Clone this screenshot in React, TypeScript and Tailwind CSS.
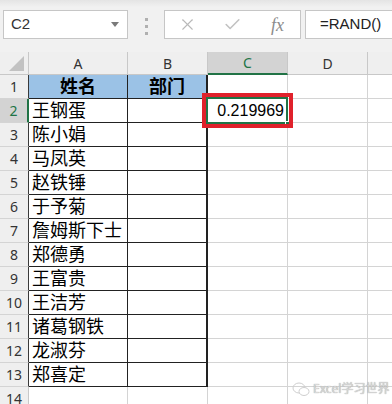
import { X, Check } from "lucide-react";

const font = { fontFamily: '"Noto Sans", "Noto Sans CJK SC", sans-serif' };

const names = [
  "王钢蛋",
  "陈小娟",
  "马凤英",
  "赵铁锤",
  "于予菊",
  "詹姆斯下士",
  "郑德勇",
  "王富贵",
  "王洁芳",
  "诸葛钢铁",
  "龙淑芬",
  "郑喜定",
];

function RowHeader({ n, selected, dark }: { n: number; selected?: boolean; dark?: boolean }) {
  return (
    <div
      className={
        "w-[29px] h-full flex items-center justify-center text-[14px] border-b border-b-[#d4d4d4] " +
        (selected
          ? "bg-[#d3d3d3] text-[#217346] border-r-2 border-r-[#217346]"
          : dark
          ? "bg-[#efefef] text-[#333] border-r border-r-[#3a3a3a]"
          : "bg-[#efefef] text-[#333] border-r border-r-[#c8c8c8]")
      }
    >
      {n}
    </div>
  );
}

function Empty({ w }: { w: string }) {
  return <div className={w + " h-full border-r border-b border-[#d4d4d4]"}></div>;
}

export default function App() {
  return (
    <div className="w-[392px] h-[404px] overflow-hidden bg-white relative" style={font}>
      {/* TOP BAR */}
      <div className="h-[52px] bg-[#f1f1f1] flex items-start pt-[10px] relative">
        <div className="absolute top-0 left-0 right-0 h-[7px] bg-gradient-to-b from-[#e4e4e4] to-[#f1f1f1]"></div>

        <div className="relative ml-[3px] w-[125px] h-[29px] bg-white border border-[#c6c6c6] flex items-center justify-between pl-[7px] pr-[8px]">
          <span className="text-[15px] text-[#333]" style={{ fontFamily: '"Liberation Sans", sans-serif' }}>C2</span>
          <svg width="8" height="5" viewBox="0 0 8 5">
            <path d="M0 0 L8 0 L4 5 Z" fill="#7a7a7a" />
          </svg>
        </div>

        <div className="ml-[17px] mt-[8px] flex flex-col gap-[4px]">
          <div className="w-[3px] h-[3px] bg-[#b0b0b0]"></div>
          <div className="w-[3px] h-[3px] bg-[#b0b0b0]"></div>
          <div className="w-[3px] h-[3px] bg-[#b0b0b0]"></div>
        </div>

        <div className="relative ml-[16px] w-[137px] h-[29px] bg-white border border-[#c6c6c6] flex items-center">
          <div className="w-[46px] flex justify-center">
            <X size={19} strokeWidth={1.4} color="#b9b9b9" />
          </div>
          <div className="w-[46px] flex justify-center">
            <Check size={19} strokeWidth={2} color="#c2c2c2" />
          </div>
          <div className="w-[46px] flex justify-center">
            <span className="text-[18px] italic text-[#8c8c8c] leading-none" style={{ fontFamily: '"Liberation Serif", serif' }}>
              fx
            </span>
          </div>
        </div>

        <div className="ml-[4px] flex-1 -mr-[4px] h-[29px] bg-white border border-[#c6c6c6] flex items-center pl-[14px]">
          <span className="text-[15px] text-[#222]" style={{ fontFamily: '"Liberation Sans", sans-serif' }}>=RAND()</span>
        </div>
      </div>

      {/* COLUMN HEADERS */}
      <div className="h-[23px] flex bg-[#efefef] text-[14px] text-[#333]">
        <div className="w-[29px] h-full border-r border-b border-[#c8c8c8] relative">
          <svg className="absolute right-[4px] bottom-[3px]" width="15" height="15" viewBox="0 0 15 15">
            <path d="M15 0 L15 15 L0 15 Z" fill="#c2c2c2" />
          </svg>
        </div>
        <div className="w-[99px] h-full border-r border-b border-[#c8c8c8] flex items-center justify-center">A</div>
        <div className="w-[80px] h-full border-r border-b border-[#c8c8c8] flex items-center justify-center">B</div>
        <div className="w-[80px] h-full bg-[#d3d3d3] text-[#217346] border-r border-r-[#c8c8c8] border-b-2 border-b-[#217346] flex items-center justify-center">
          C
        </div>
        <div className="w-[80px] h-full border-r border-b border-[#c8c8c8] flex items-center justify-center">D</div>
        <div className="flex-1 h-full border-b border-[#c8c8c8]"></div>
      </div>

      {/* ROW 1 */}
      <div className="h-[24px] flex">
        <RowHeader n={1} dark />
        <div className="w-[99px] h-full bg-[#9bc2e6] border-r border-b border-[#222] flex items-center justify-center text-[18px] font-bold text-black">
          姓名
        </div>
        <div className="w-[80px] h-full bg-[#9bc2e6] border-r-2 border-b border-[#222] flex items-center justify-center text-[18px] font-bold text-black">
          部门
        </div>
        <Empty w="w-[80px]" />
        <Empty w="w-[80px]" />
        <div className="flex-1 h-full border-b border-[#d4d4d4]"></div>
      </div>

      {/* ROWS 2-13 */}
      {names.map((name, i) => (
        <div key={name} className="h-[24px] flex">
          <RowHeader n={i + 2} selected={i === 0} dark />
          <div className="w-[99px] h-full border-r border-b border-[#222] flex items-center pl-[3px] text-[18px] text-black whitespace-nowrap">
            {name}
          </div>
          <div className="w-[80px] h-full border-r-2 border-b border-[#222]"></div>
          {i === 0 ? (
            <div className="w-[80px] h-full border-r border-b border-[#d4d4d4] relative flex items-center justify-end pr-[3px]">
              <span className="text-[16px] text-black" style={{ fontFamily: '"Liberation Sans", sans-serif' }}>0.219969</span>
              {/* selection */}
              <div className="absolute -left-[2px] -top-[2px] -right-[1px] -bottom-[2px] border-2 border-[#217346]"></div>
              <div className="absolute -right-[3px] -bottom-[4px] w-[5px] h-[5px] bg-[#217346] border border-white"></div>
              {/* red mark */}
              <div className="absolute -left-[6px] -top-[6px] -right-[6px] -bottom-[6px] border-4 border-[#e0212b]"></div>
            </div>
          ) : (
            <Empty w="w-[80px]" />
          )}
          <Empty w="w-[80px]" />
          <div className="flex-1 h-full border-b border-[#d4d4d4]"></div>
        </div>
      ))}

      {/* ROW 14 */}
      <div className="h-[24px] flex">
        <RowHeader n={14} />
        <Empty w="w-[99px]" />
        <Empty w="w-[80px]" />
        <Empty w="w-[80px]" />
        <Empty w="w-[80px]" />
        <div className="flex-1 h-full border-b border-[#d4d4d4]"></div>
      </div>

      {/* WATERMARK */}
      <div className="absolute left-[292px] top-[380px] flex items-center gap-[3px] text-[12px] text-[#d8d8d8]" style={{ textShadow: "0 0 1px #888" }}>
        <svg width="18" height="15" viewBox="0 0 18 15" fill="none" stroke="#cfcfcf" strokeWidth="1">
          <ellipse cx="7" cy="6" rx="6" ry="5" />
          <ellipse cx="12" cy="9.5" rx="5" ry="4" fill="white" />
        </svg>
        <span>Excel学习世界</span>
      </div>
    </div>
  );
}
